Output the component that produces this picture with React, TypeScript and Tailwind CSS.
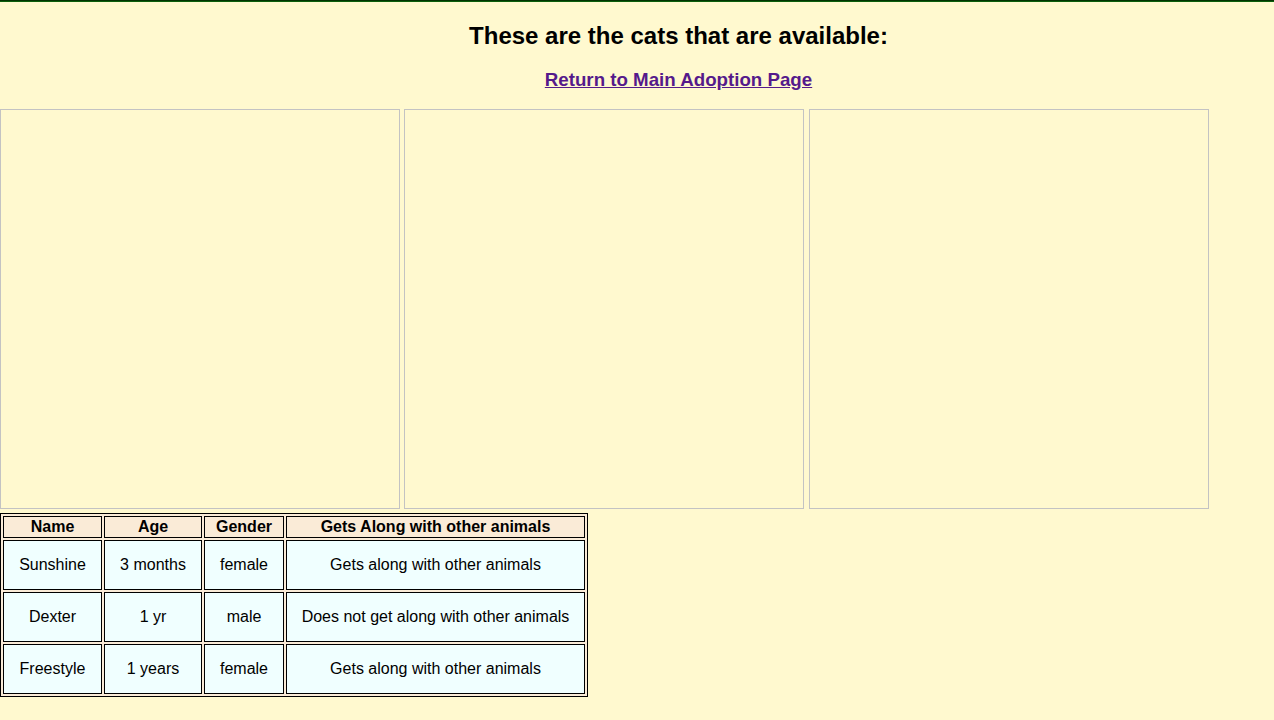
const cats = [
  { name: "Sunshine", age: "3 months", gender: "female", animals: "Gets along with other animals" },
  { name: "Dexter", age: "1 yr", gender: "male", animals: "Does not get along with other animals" },
  { name: "Freestyle", age: "1 years", gender: "female", animals: "Gets along with other animals" },
];

export default function App() {
  return (
    <div className="min-h-[720px] bg-[#fff9cf] text-black font-['Liberation_Sans',Arial,sans-serif]">
      {/* top rule */}
      <div className="h-[1px] bg-[#023302]" />
      <div className="h-[1px] bg-[#0b5e0b]" />

      <div className="pl-[83px] text-center">
        <h2 className="mt-[19.92px] text-[24px] font-bold leading-[27.6px]">
          These are the cats that are available:
        </h2>
        <h3 className="mt-[19.92px] mb-[17.72px] text-[18.72px] font-bold leading-[21.5px]">
          <a href="#" className="text-[#551a8b] underline">
            Return to Main Adoption Page
          </a>
        </h3>
      </div>

      {/* cat pictures (not loaded) */}
      <div className="flex gap-[4.4px]">
        <div className="w-[400px] h-[400px] border border-[#c3c3c3]" />
        <div className="w-[400px] h-[400px] border border-[#c3c3c3]" />
        <div className="w-[400px] h-[400px] border border-[#c3c3c3]" />
      </div>

      <table className="mt-[4px] border border-black border-separate border-spacing-[2px] bg-[#faebd7] text-[16px]">
        <thead>
          <tr className="bg-[#faebd7]">
            <th className="w-[99px] border border-black p-[1px] font-bold leading-[18.4px]">Name</th>
            <th className="w-[98px] border border-black p-[1px] font-bold leading-[18.4px]">Age</th>
            <th className="w-[80px] border border-black p-[1px] font-bold leading-[18.4px]">Gender</th>
            <th className="w-[299px] border border-black p-[1px] font-bold leading-[18.4px]">
              Gets Along with other animals
            </th>
          </tr>
        </thead>
        <tbody>
          {cats.map((cat) => (
            <tr key={cat.name} className="bg-[#f0ffff] h-[50px]">
              <td className="border border-black p-[1px] text-center">{cat.name}</td>
              <td className="border border-black p-[1px] text-center">{cat.age}</td>
              <td className="border border-black p-[1px] text-center">{cat.gender}</td>
              <td className="border border-black p-[1px] text-center">{cat.animals}</td>
            </tr>
          ))}
        </tbody>
      </table>
    </div>
  );
}
